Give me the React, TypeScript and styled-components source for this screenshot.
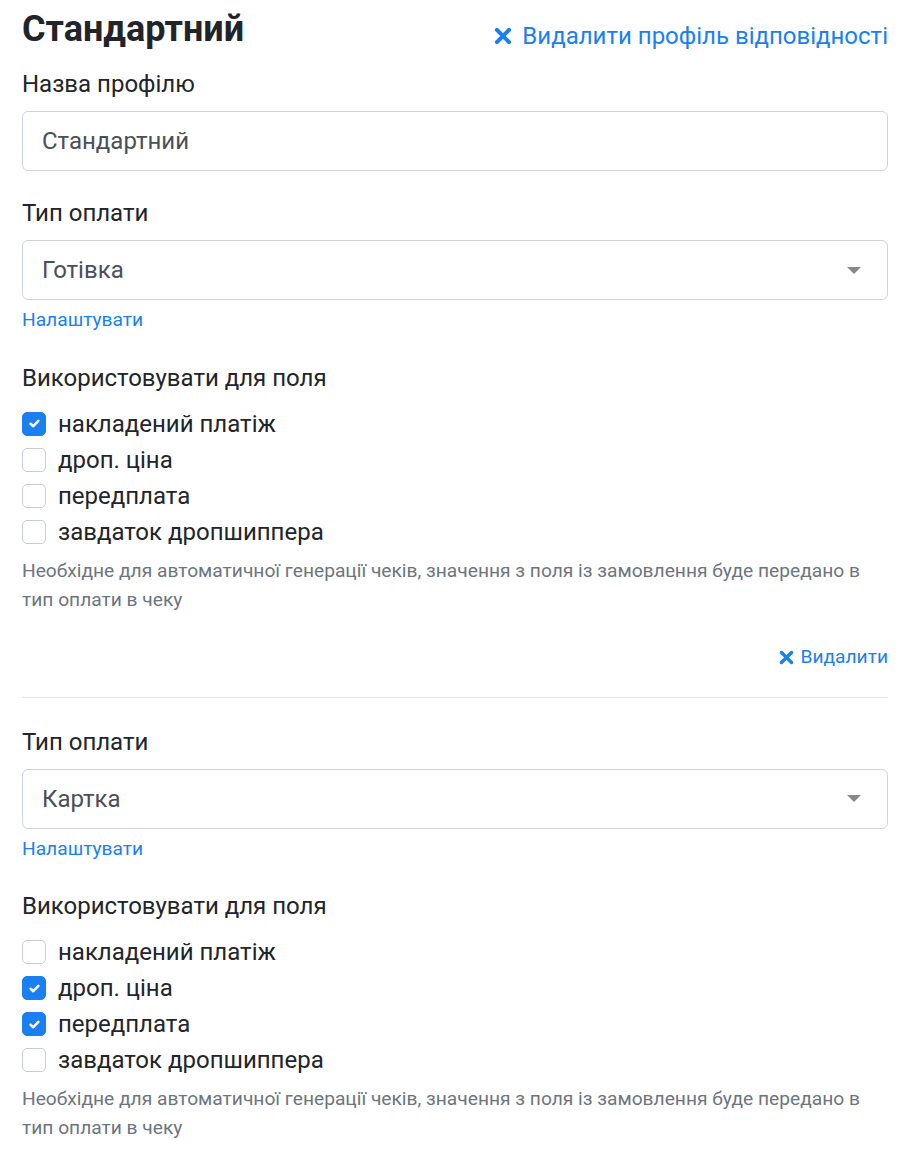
import React from "react";
import styled, { createGlobalStyle } from "styled-components";

const Global = createGlobalStyle`
  html, body { margin: 0; padding: 0; background: #fff; }
  body { font-family: Roboto, "Noto Sans", Arial, sans-serif; color: #212529; }
  * { box-sizing: border-box; }
`;

const Page = styled.div`
  padding: 8px 14px 20px 22px;
  display: flex;
  flex-direction: column;
`;

const Header = styled.div`
  display: flex;
  justify-content: space-between;
  align-items: flex-start;
`;

const Title = styled.h1`
  margin: 0;
  font-size: 36px;
  font-weight: 700;
  line-height: 43px;
  color: #212529;
`;

const LinkButton = styled.a<{ $size: number; $gap: number; $mt?: number }>`
  display: inline-flex;
  align-items: center;
  gap: ${(p) => p.$gap}px;
  margin-top: ${(p) => p.$mt ?? 0}px;
  color: #1a7ff0;
  font-size: ${(p) => p.$size}px;
  text-decoration: none;
  cursor: pointer;
  line-height: 1.5;
`;

const Label = styled.div`
  font-size: 24px;
  line-height: 36px;
  margin-bottom: 9px;
  color: #212529;
`;

const Field = styled.div`
  height: 60px;
  border: 1px solid #ced4da;
  border-radius: 6px;
  display: flex;
  align-items: center;
  justify-content: space-between;
  padding: 0 26px 0 19px;
  font-size: 24px;
  color: #495057;
`;

const Caret = styled.span`
  width: 0;
  height: 0;
  border-left: 7px solid transparent;
  border-right: 7px solid transparent;
  border-top: 7px solid #888;
`;

const Group = styled.div<{ $mt: number }>`
  margin-top: ${(p) => p.$mt}px;
`;

const Small = styled.a`
  display: block;
  margin-top: 6px;
  font-size: 19.2px;
  color: #1a7ff0;
  line-height: 28.8px;
`;

const CheckList = styled.div`
  display: flex;
  flex-direction: column;
  margin-top: 10px;
`;

const CheckRow = styled.label`
  display: flex;
  align-items: center;
  gap: 12px;
  height: 36px;
  font-size: 24px;
  color: #212529;
`;

const Box = styled.span<{ $on: boolean }>`
  width: 24px;
  height: 24px;
  border-radius: 5px;
  border: 1px solid ${(p) => (p.$on ? "#1a7ff0" : "#c8cdd2")};
  background: ${(p) => (p.$on ? "#1a7ff0" : "#fff")};
  display: flex;
  align-items: center;
  justify-content: center;
`;

const Help = styled.p`
  margin: 6px 0 0;
  font-size: 19.2px;
  line-height: 29px;
  color: #6c757d;
`;

const RightRow = styled.div`
  display: flex;
  justify-content: flex-end;
  margin-top: 29px;
`;

const Divider = styled.hr`
  border: none;
  border-top: 1px solid #e3e5e8;
  margin: 25px 0 26px;
`;

const XIcon = ({ size, stroke }: { size: number; stroke: number }) => (
  <svg width={size} height={size} viewBox="0 0 16 16">
    <path
      d="M2.6 2.6 L13.4 13.4 M13.4 2.6 L2.6 13.4"
      stroke="#1a7ff0"
      strokeWidth={stroke}
      strokeLinecap="round"
      fill="none"
    />
  </svg>
);

const Check = () => (
  <svg width="13" height="13" viewBox="0 0 12 12">
    <path d="M2.4 6.2 L4.9 8.5 L9.6 3.6" stroke="#fff" strokeWidth="2.3" fill="none" strokeLinecap="round" strokeLinejoin="round" />
  </svg>
);

const fields = ["накладений платіж", "дроп. ціна", "передплата", "завдаток дропшиппера"];

const PaymentBlock = ({ value, checked, mt }: { value: string; checked: boolean[]; mt: number }) => (
  <>
    <Group $mt={mt}>
      <Label>Тип оплати</Label>
      <Field>
        <span>{value}</span>
        <Caret />
      </Field>
      <Small>Налаштувати</Small>
    </Group>
    <Group $mt={25}>
      <Label>Використовувати для поля</Label>
      <CheckList>
        {fields.map((f, i) => (
          <CheckRow key={f}>
            <Box $on={checked[i]}>{checked[i] && <Check />}</Box>
            {f}
          </CheckRow>
        ))}
      </CheckList>
      <Help>
        Необхідне для автоматичної генерації чеків, значення з поля із замовлення буде передано в тип оплати в
        чеку
      </Help>
    </Group>
  </>
);

export default function App() {
  return (
    <Page>
      <Global />
      <Header>
        <Title>Стандартний</Title>
        <LinkButton $size={24} $gap={10} $mt={10}>
          <XIcon size={18} stroke={3.6} />
          Видалити профіль відповідності
        </LinkButton>
      </Header>
      <Group $mt={12}>
        <Label>Назва профілю</Label>
        <Field>Стандартний</Field>
      </Group>
      <PaymentBlock value="Готівка" checked={[true, false, false, false]} mt={24} />
      <RightRow>
        <LinkButton $size={19.2} $gap={6}>
          <XIcon size={15} stroke={3.6} />
          Видалити
        </LinkButton>
      </RightRow>
      <Divider />
      <PaymentBlock value="Картка" checked={[false, true, true, false]} mt={0} />
    </Page>
  );
}
